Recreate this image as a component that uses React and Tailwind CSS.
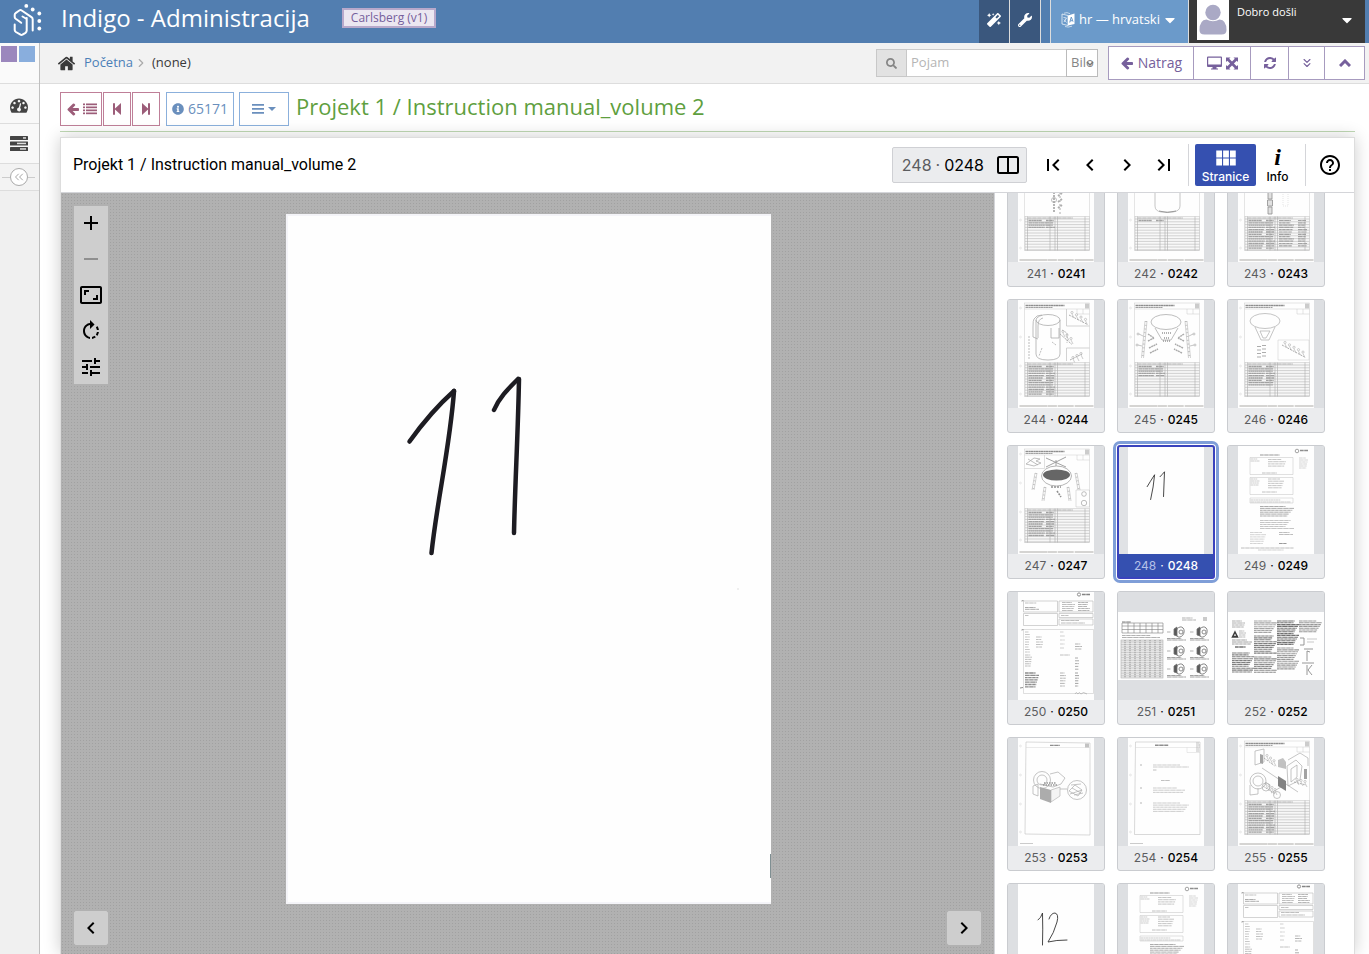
import React from "react";
import { FaMagic, FaWrench, FaCaretDown, FaSearch, FaInfoCircle } from "react-icons/fa";
import {
  MdAdd,
  MdRemove,
  MdAspectRatio,
  MdRotateRight,
  MdTune,
  MdViewModule,
  MdHelpOutline,
  MdFirstPage,
  MdLastPage,
  MdNavigateBefore,
  MdNavigateNext,
} from "react-icons/md";
import { ChevronRight, ChevronsLeft, ChevronsDown } from "lucide-react";

const GLYPHS = {
  home: "M1472 992v480q0 26-19 45t-45 19h-384v-384h-256v384h-384q-26 0-45-19t-19-45v-480q0-1 .5-3t.5-3l575-474 575 474q1 2 1 6zm223-69l-62 74q-8 9-21 11h-3q-13 0-21-7l-692-577-692 577q-12 8-24 7-13-2-21-11l-62-74q-8-10-7-23.5t11-21.5l719-599q32-26 76-26t76 26l244 204v-195q0-14 9-23t23-9h192q14 0 23 9t9 23v408l219 182q10 8 11 21.5t-7 23.5z",
  gauge: "M384 1152q0-53-37.5-90.5t-90.5-37.5-90.5 37.5-37.5 90.5 37.5 90.5 90.5 37.5 90.5-37.5 37.5-90.5zm192-448q0-53-37.5-90.5t-90.5-37.5-90.5 37.5-37.5 90.5 37.5 90.5 90.5 37.5 90.5-37.5 37.5-90.5zm428 481l101-382q6-26-7.5-48.5t-38.5-29.5-48 6.5-30 39.5l-101 382q-60 5-107 43.5t-63 98.5q-20 77 20 146t117 89 146-20 89-117q16-60-6-117t-72-91zm660-33q0-53-37.5-90.5t-90.5-37.5-90.5 37.5-37.5 90.5 37.5 90.5 90.5 37.5 90.5-37.5 37.5-90.5zm-640-640q0-53-37.5-90.5t-90.5-37.5-90.5 37.5-37.5 90.5 37.5 90.5 90.5 37.5 90.5-37.5 37.5-90.5zm448 192q0-53-37.5-90.5t-90.5-37.5-90.5 37.5-37.5 90.5 37.5 90.5 90.5 37.5 90.5-37.5 37.5-90.5zm320 448q0 261-141 483-19 29-54 29h-1402q-35 0-54-29-141-221-141-483 0-182 71-348t191-286 286-191 348-71 348 71 286 191 191 286 71 348z",
  arrowLeft: "M1664 896v128q0 53-32.5 90.5t-84.5 37.5h-704l293 294q38 36 38 90t-38 90l-75 76q-37 37-90 37-52 0-91-37l-651-652q-37-37-37-90 0-52 37-91l651-650q38-38 91-38 52 0 90 38l75 74q38 38 38 91t-38 91l-293 293h704q52 0 84.5 37.5t32.5 90.5z",
  refresh: "M1639 1056q0 5-1 7-64 268-268 434.5t-478 166.5q-146 0-282.5-55t-243.5-157l-129 129q-19 19-45 19t-45-19-19-45v-448q0-26 19-45t45-19h448q26 0 45 19t19 45-19 45l-137 137q71 66 161 102t187 36q134 0 250-65t186-179q11-17 53-117 8-23 30-23h192q13 0 22.5 9.5t9.5 22.5zm25-800v448q0 26-19 45t-45 19h-448q-26 0-45-19t-19-45 19-45l138-138q-148-137-349-137-134 0-250 65t-186 179q-11 17-53 117-8 23-30 23h-199q-13 0-22.5-9.5t-9.5-22.5v-7q65-268 270-434.5t480-166.5q146 0 284 55.5t245 156.5l130-129q19-19 45-19t45 19 19 45z",
};

function Glyph({ name, className }) {
  return (
    <svg viewBox="0 0 1792 1792" fill="currentColor" className={className} aria-hidden="true">
      <path d={GLYPHS[name]} />
    </svg>
  );
}

function Logo() {
  return (
    <svg viewBox="0 0 32 36" className="h-9 w-8 shrink-0" fill="none" stroke="white" strokeWidth="2" strokeLinejoin="round" strokeLinecap="round">
      <path d="M20.700 26.500V15.500q0-1.500-1.200-2.300L9.700 6.500q-1.200-.8-2.400 0L3.900 8.800q-1.200.8-1.200 2v2.200q0 1 1 1.800l5.500 4" />
      <path d="M14.700 14v12.500q0 1.500-1.200 2.300l-3 1.900q-1 .6-2 0L3.900 28q-1.200-.8-1.200-2v-5.500M10.500 12.500l4.200 2.500" />
      <g fill="white" stroke="none">
        <circle cx="14.300" cy="1.900" r="1.900" />
        <circle cx="20.700" cy="5.500" r="1.900" />
        <circle cx="27.300" cy="9.500" r="1.900" />
        <circle cx="27.300" cy="17" r="1.900" />
        <circle cx="27.300" cy="24.500" r="1.900" />
      </g>
    </svg>
  );
}

function ListGlyph() {
  return (
    <svg viewBox="0 0 14 12" className="h-3 w-3.5" fill="currentColor" aria-hidden="true">
      {[0, 3, 6, 9].map((y) => (
        <g key={y}>
          <rect x="0" y={y + 0.5} width="2" height="1.700" />
          <rect x="3" y={y + 0.5} width="11" height="1.700" />
        </g>
      ))}
    </svg>
  );
}

function StepGlyph({ flip }) {
  return (
    <svg viewBox="0 0 10 12" className="h-3 w-2.5" fill="currentColor" aria-hidden="true">
      {flip ? <path d="M1 0l6 5.500V0.200h2v11.600H7V6.500L1 12z" /> : <path d="M9 0L3 5.500V0.200H1v11.600h2V6.500L9 12z" />}
    </svg>
  );
}

function TasksGlyph() {
  return (
    <svg viewBox="0 0 18 15" className="h-[15px] w-[18px]" aria-hidden="true">
      {[[0, 13, 4], [5.5, 7, 10], [11, 10, 7]].map(([y, x, w]) => (
        <g key={y}>
          <rect x="0" y={y} width="18" height="4" rx="0.500" fill="#444" />
          <rect x={x} y={y + 1.2} width={w - 1} height="1.500" fill="#ddd" />
        </g>
      ))}
    </svg>
  );
}

function TranslateGlyph() {
  return (
    <svg viewBox="0 0 14 16" className="h-4 w-3.5" aria-hidden="true">
      <path d="M1 2l6 1.500v10L1 12z" fill="none" stroke="white" strokeWidth="0.700" />
      <path d="M7 3.500L13.500 1.500v10.500L7 13.500z" fill="white" />
      <path d="M2.500 5.500l3 .5-2.500 4M3 7.500l2.500 3" stroke="white" strokeWidth="0.700" fill="none" />
      <path d="M8.700 10.500l1.600-5.500 1.700 4.700M9.300 9l2.300-.6" stroke="#6b9aca" strokeWidth="1" fill="none" />
      <path d="M3 1.200q3-1.400 6 .5M4 14.500q3 1.300 7-.3" stroke="white" strokeWidth="0.600" fill="none" />
    </svg>
  );
}

function ScreenGlyph() {
  return (
    <svg viewBox="0 0 31 14" className="h-3.5 w-[31px]" fill="currentColor" aria-hidden="true">
      <path fillRule="evenodd" d="M1 0.500h13q1 0 1 1v8.500q0 1-1 1H9.500v1.500h1.500v1H4v-1h1.500V11H1q-1 0-1-1V1.500q0-1 1-1zM1.200 1.700v6.800h12.600V1.700z" />
      <path d="M19 1.500h4.500L22.200 2.800 25 5.600l2.800-2.800L26.500 1.500H31V6l-1.300-1.300L26.900 7.500l2.800 2.800L31 9v4.500h-4.500l1.300-1.300L25 9.400l-2.800 2.800 1.300 1.300H19V9l1.300 1.300 2.800-2.800-2.800-2.800L19 6z" />
    </svg>
  );
}

/* ---- Miniature page drawings ---- */

function Lines({ x, y, w, n, step = 2, seed = 1, color = "#8d8d8d", t = 0.9 }) {
  return Array.from({ length: n }, (_, i) => {
    const cut = ((i * 7 + seed * 5) % 6) / 20;
    return (
      <line
        key={i}
        x1={x}
        x2={x + w * (1 - cut)}
        y1={y + i * step}
        y2={y + i * step}
        stroke={color}
        strokeWidth={t}
        strokeDasharray={`${2 + ((i + seed) % 3)} 0.3 1.5 0.2`}
      />
    );
  });
}

function Holes() {
  return [8, 37, 66, 94].map((y) => <circle key={y} cx="2.500" cy={y} r="0.900" fill="none" stroke="#bbb" strokeWidth="0.500" />);
}

function PartsTable({ left = 0, right = 0 }) {
  return (
    <g>
      <rect x="7" y="62.500" width="64.500" height="34" fill="#f3f3f3" stroke="#999" strokeWidth="0.500" />
      {Array.from({ length: 12 }, (_, i) => (
        <line key={i} x1="7" x2="71.500" y1={65 + i * 2.8} y2={65 + i * 2.8} stroke="#888" strokeWidth="0.600" />
      ))}
      <path d="M9.500 62.500v34M32 62.500v34M37 62.500v34M39.500 62.500v34M67 62.500v34" stroke="#777" strokeWidth="0.600" />
      <Lines x={10} y={64} w={60} n={1} color="#777" />
      {left > 0 && (
        <g>
          <Lines x={10.5} y={66.500} w={18} n={left} step={2.3} color="#666" t={1.3} />
          <Lines x={28} y={66.500} w={9} n={left} step={2.3} seed={3} color="#666" t={1.3} />
        </g>
      )}
      {right > 0 && (
        <g>
          <Lines x={41} y={66.500} w={15} n={right} step={2.3} seed={2} color="#666" t={1.2} />
          <Lines x={60} y={66.500} w={9} n={right} step={2.3} seed={4} color="#666" t={1.2} />
        </g>
      )}
    </g>
  );
}

function PartsPage({ left, right, children }) {
  return (
    <g>
      <Holes />
      <rect x="6.500" y="3" width="65" height="93.500" fill="none" stroke="#aaa" strokeWidth="0.500" />
      <Lines x={7.5} y={5.500} w={52} n={1} color="#444" t={1.3} />
      <Lines x={7.5} y={7.500} w={36} n={1} color="#666" t={1.1} />
      <path d="M6.500 9h65M59 9v5h12.500M65 9v5" stroke="#aaa" strokeWidth="0.500" fill="none" />
      <rect x="67" y="3.500" width="4" height="5" fill="#aaa" />
      {children}
      <PartsTable left={left} right={right} />
      <path d="M1.500 106h74" stroke="#a5a39e" strokeWidth="1.600" strokeDasharray="28 .4 9 .8 16 1" />
    </g>
  );
}

function Leg({ x, y, dx = -3, h = 34 }) {
  return (
    <g stroke="#888" strokeWidth="0.600" fill="none">
      <path d={`M${x} ${y}l${dx} ${h}M${x + 2} ${y}l${dx} ${h}`} />
      <path d={`M${x + 1} ${y}l${dx} ${h}`} strokeWidth="2" strokeDasharray="0.800 3" />
    </g>
  );
}

function Bolts({ x, y, n = 4, dx = 4, dy = 3 }) {
  return (
    <g stroke="#777" strokeWidth="0.600" fill="none">
      <path d={`M${x} ${y}l${n * dx} ${n * dy}`} strokeWidth="1" strokeDasharray="2 1" />
      {Array.from({ length: n }, (_, i) => (
        <g key={i}>
          <circle cx={x + i * dx + 3} cy={y + i * dy - 2.5} r="1.100" />
          <path d={`M${x + i * dx + 3} ${y + i * dy - 1}l2 4`} />
        </g>
      ))}
    </g>
  );
}

function LetterPage() {
  return (
    <g>
      <circle cx="59" cy="5" r="1.800" fill="none" stroke="#666" strokeWidth="1" />
      <Lines x={62} y={4.500} w={11} n={1} color="#444" t={1.600} />
      <Lines x={61} y={12} w={9} n={6} step={2} color="#999" t={0.7} />
      <Lines x={22} y={9} w={26} n={1} color="#555" t={1} />
      <path d="M12 11.500h43v17H12zM12 31.500h43v17H12zM12 52h43v5H12z" fill="none" stroke="#999" strokeWidth="0.500" />
      <Lines x={12.500} y={13} w={9} n={2} color="#888" t={0.7} />
      <Lines x={30} y={13.500} w={18} n={4} step={2.2} color="#777" t={0.7} />
      <Lines x={12.500} y={33} w={9} n={4} color="#888" t={0.7} />
      <Lines x={30} y={33} w={16} n={5} step={2.2} color="#777" t={0.7} />
      <Lines x={24} y={27} w={20} n={1} />
      <Lines x={24} y={46} w={20} n={1} />
      <Lines x={12.500} y={54} w={40} n={2} color="#888" t={0.7} />
      <Lines x={22} y={60.500} w={34} n={6} step={1.9} color="#666" t={0.9} />
      <Lines x={22} y={74.500} w={34} n={5} step={2} seed={4} color="#888" t={0.8} />
      <Lines x={12} y={86.500} w={16} n={6} step={2.2} color="#999" t={0.7} />
      <Lines x={41} y={86.500} w={14} n={2} color="#777" t={0.8} />
      <Lines x={41} y={97.500} w={10} n={1} color="#444" />
      <Lines x={3} y={102} w={70} n={1} color="#888" />
      <Lines x={20} y={104} w={34} n={1} color="#aaa" />
    </g>
  );
}

function FormPage() {
  return (
    <g>
      <circle cx="61" cy="2.500" r="1.600" fill="none" stroke="#444" />
      <Lines x={64} y={2.500} w={11} n={1} color="#333" t={1.700} />
      <path d="M5.500 9h34v11h-34zM41 9h34v11h-34zM5.500 21.500h34v12h-34zM41 21.500h34v4H41zM41 27h34v6H41z" fill="none" stroke="#888" strokeWidth="0.600" />
      <path d="M5.500 37.500h70v64h-70z" fill="none" stroke="#999" strokeWidth="0.500" />
      <Lines x={7} y={11} w={15} n={1} />
      <Lines x={7} y={15.500} w={14} n={2} step={1.800} color="#666" />
      <Lines x={44} y={10.500} w={13} n={5} color="#888" />
      <Lines x={60} y={10.500} w={12} n={5} color="#777" seed={3} />
      <Lines x={7} y={23.500} w={5} n={1} />
      <Lines x={43} y={23.500} w={10} n={1} />
      <Lines x={43} y={28.500} w={24} n={2} step={2.500} color="#888" />
      <Lines x={7} y={40} w={5} n={9} step={2.500} color="#999" />
      <Lines x={18} y={45} w={7} n={5} step={2.500} seed={2} />
      <Lines x={42} y={40} w={5} n={5} step={4} color="#aaa" />
      <Lines x={57} y={52} w={7} n={3} step={2.500} color="#777" />
      <Lines x={42} y={63} w={13} n={1} />
      <Lines x={7} y={63} w={7} n={6} step={2.200} color="#888" />
      <Lines x={57} y={66} w={4} n={5} step={2.800} color="#666" />
      <Lines x={7} y={81} w={14} n={7} step={2.300} color="#444" t={1.300} />
      <Lines x={42} y={81} w={6} n={6} step={2.600} color="#777" />
      <Lines x={57} y={81} w={4} n={6} step={2.600} color="#555" />
      <path d="M3.500 9l2-.5M3.500 38l2-.5M2 96l3-.5" stroke="#444" strokeWidth="1" />
      <path d="M57 102q1-3 3 0 1-3 3 0 2-3 6 0" fill="none" stroke="#666" strokeWidth="0.600" />
    </g>
  );
}

const HANDWRITTEN = {
  248: (
    <g fill="none" stroke="#333" strokeWidth="0.900" strokeLinecap="round" strokeLinejoin="round">
      <path d="M19 40q3-5 7.500-12-1 12-4 25" />
      <path d="M32 30q2-2 4.500-5-.500 12-1 25" />
    </g>
  ),
  256: (
    <g fill="none" stroke="#333" strokeWidth="0.900" strokeLinecap="round">
      <path d="M20 36q3-2 4.500-7 .500 16 0 32" />
      <path d="M31 35q2-6 6-6 4 1 2 9-3 11-9 20 8-2 19-2" />
    </g>
  ),
};

const DRAWINGS = {
  241: (
    <PartsPage left={4}>
      <path d="M36 38v20M40 42l4-3M40 48l4-3M40 54l4-3" stroke="#777" strokeWidth="1.800" strokeDasharray="2 1" />
      <circle cx="36" cy="46" r="2.500" fill="none" stroke="#666" strokeWidth="0.700" />
      <path d="M42 38v22" stroke="#777" strokeWidth="1" strokeDasharray="2 2" />
    </PartsPage>
  ),
  242: (
    <PartsPage left={1}>
      <path d="M27 38v14q0 5 6 6h12q7-1 7-6V38" fill="none" stroke="#777" strokeWidth="0.700" />
      <path d="M31 57q8 3 17 0" fill="none" stroke="#555" />
    </PartsPage>
  ),
  243: (
    <PartsPage left={13} right={12}>
      <path d="M30 38h4v7h-4zM29.500 46h5v6h-5zM30 53h4v7h-4z" fill="#ccc" stroke="#444" strokeWidth="0.800" />
      <path d="M45 38v14h5V38" fill="none" stroke="#aaa" strokeWidth="0.500" strokeDasharray="1 1" />
    </PartsPage>
  ),
  244: (
    <PartsPage left={13}>
      <g fill="none" stroke="#666" strokeWidth="0.700">
        <ellipse cx="30" cy="20" rx="12" ry="5.500" />
        <path d="M18 20v34q0 6 12 6t12-6V20" />
        <path d="M24 15q-6 0-8 4-1 1-1 8v10l5 2M25 18q-5 1-5 8v12M33 28v10h8V28" />
        <path d="M48.500 9v17h23M48.500 61V48h23" stroke="#999" />
        <path d="M11 36v24M24 48l-3 8M44 30l5 3v10M38 45l-4-3" strokeDasharray="2 1" />
      </g>
      <Bolts x={51} y={15} n={4} dx={4.5} dy={2.3} />
      <Bolts x={42} y={34} n={3} dx={4} dy={3.5} />
      <Bolts x={52} y={60} n={3} dx={4} dy={-2} />
    </PartsPage>
  ),
  245: (
    <PartsPage left={5}>
      <ellipse cx="38" cy="22" rx="15" ry="7.500" fill="none" stroke="#666" strokeWidth="0.700" />
      <path d="M27 28l7 12h9l7-12" fill="none" stroke="#666" strokeWidth="0.700" />
      <path d="M34 33h9M36 38h5M35 41h7" stroke="#555" strokeWidth="1.500" strokeDasharray="1 1" />
      <Leg x={17} y={21} dx={-3.5} h={37} />
      <Leg x={57} y={21} dx={3.5} h={37} />
      <g fill="none" stroke="#777" strokeWidth="0.700">
        <path d="M20 34l6 4M20 41l6-3M21 48l8-4M22 53l8-4M56 34l-6 4M56 41l-6-3M55 48l-8-4M54 53l-8-4" strokeWidth="1.400" strokeDasharray="2 0.500" />
        <circle cx="10" cy="34" r="1" />
        <circle cx="66" cy="34" r="1" />
        <circle cx="9" cy="45" r="1" />
        <circle cx="67" cy="45" r="1" />
        <path d="M11 34l4 2M65 34l-4 2M10 45l4 1M66 45l-4 1" />
      </g>
    </PartsPage>
  ),
  246: (
    <PartsPage left={9}>
      <ellipse cx="27" cy="21" rx="15" ry="7.500" fill="none" stroke="#777" strokeWidth="0.700" />
      <path d="M17 27l6 13h8l6-13M22 31h10l-4 7h-3z" fill="none" stroke="#777" strokeWidth="0.700" />
      <path d="M26 45v14M21 46v12" stroke="#777" strokeWidth="4" strokeDasharray="1 2.500" />
      <path d="M40 40h31v20H40z" fill="none" stroke="#aaa" strokeWidth="0.500" />
      <Bolts x={44} y={45} n={5} dx={4.5} dy={2.4} />
    </PartsPage>
  ),
  247: (
    <PartsPage left={11}>
      <path d="M6.500 22.500h20V9M58 44h13.500v17H58z" fill="none" stroke="#999" strokeWidth="0.500" />
      <path d="M8 18l8-6 6 1-4 2 5 2-7 3zM10 13l10 6" fill="none" stroke="#777" strokeWidth="0.800" />
      <path d="M28 12l20 9M48 11l-20 10M38 14v6" stroke="#555" strokeWidth="0.900" />
      <ellipse cx="38.500" cy="30" rx="15" ry="10" fill="none" stroke="#666" strokeWidth="0.800" />
      <ellipse cx="38.500" cy="29" rx="13.500" ry="5.500" fill="#000" />
      <Leg x={17} y={27} dx={-3} h={17} />
      <Leg x={57} y={27} dx={3} h={17} />
      <Leg x={26} y={41} dx={-2} h={14} />
      <Leg x={49} y={41} dx={2} h={14} />
      <path d="M33 41h10M39 45l4 6" stroke="#444" strokeWidth="1.600" strokeDasharray="2 1" />
      <circle cx="66" cy="48" r="2.300" fill="none" stroke="#666" strokeWidth="0.700" />
      <circle cx="66" cy="57" r="2.700" fill="none" stroke="#666" strokeWidth="0.700" />
    </PartsPage>
  ),
  249: <LetterPage />,
  250: <FormPage />,
  253: (
    <g>
      <Holes />
      <path d="M8 4l64 1v92l-65-1z" fill="none" stroke="#999" strokeWidth="0.600" />
      <path d="M8 9.500h64" stroke="#bbb" strokeWidth="0.500" />
      <Lines x={32} y={7.300} w={13} n={1} color="#444" t={1.200} />
      <rect x="67" y="5.500" width="4" height="4" fill="#999" />
      <g fill="none" stroke="#777" strokeWidth="0.700">
        <circle cx="24" cy="42" r="8.500" />
        <circle cx="24" cy="42" r="5" />
        <path d="M32 36l8-2 7 6-4 6-8 3-13-3M15 48l5-2v12l-5-2z" />
        <circle cx="59" cy="52" r="9.500" />
        <path d="M51 53l6-6 7 5-4 6zM54 50l9 5M52 56l12-4M41 51h8M53 47l10-1M56 57l9-2" />
      </g>
      <path d="M22 49l11 3v13l-11-4z" fill="#777" />
      <path d="M33 52l9-3v9l-9 6z" fill="#eee" stroke="#777" strokeWidth="0.600" />
      <path d="M26 45h12M25 47h14" stroke="#555" strokeWidth="1.300" strokeDasharray="1.500 1" />
      <path d="M2 105.500h13" stroke="#aaa" />
    </g>
  ),
  254: (
    <g>
      <Holes />
      <path d="M7.500 4H72v92.500H6.500z" fill="none" stroke="#999" strokeWidth="0.600" />
      <path d="M7.500 9.500H72M59 9.500v5h13" fill="none" stroke="#bbb" strokeWidth="0.500" />
      <Lines x={27} y={7.300} w={18} n={1} color="#444" t={1.400} />
      <Lines x={68} y={5} w={4} n={5} />
      <Lines x={25} y={27} w={36} n={2} color="#999" t={0.8} />
      <Lines x={25} y={32} w={5} n={1} />
      <Lines x={33} y={42.500} w={12} n={1} />
      <Lines x={25} y={50} w={32} n={3} step={2.200} color="#999" t={0.8} />
      <Lines x={25} y={65} w={36} n={5} step={2.100} color="#999" t={0.8} />
      <path d="M12 27h2M12 50h2M12 65h2" stroke="#888" />
      <path d="M2 105.500h13" stroke="#aaa" />
    </g>
  ),
  255: (
    <PartsPage left={13}>
      <g fill="none" stroke="#777" strokeWidth="0.700">
        <path d="M17 13l9-2v13l-9 3zM50 22l12-7 8 5v8M49 28l9-6 6 6-2 14-12 6zM53 31l6-4v12l-6 5z" />
        <circle cx="20" cy="43" r="8" />
        <circle cx="20" cy="43" r="5" />
        <path d="M12 47v10l8-1v-6M24 30l36 24M33 55l10-6" />
        <circle cx="28" cy="49" r="4" />
        <circle cx="39" cy="57" r="3.500" />
      </g>
      <path d="M22 16l3 1v9l-3-1zM66 31h3v10h-3z" fill="#666" />
      <path d="M40 38l8 5v10l-8-5z" fill="#333" />
      <path d="M40 22l5-2 3 4v7l-8-2z" fill="#999" />
      <Bolts x={26} y={20} n={3} dx={3.5} dy={2.6} />
      <Bolts x={25} y={48} n={4} dx={3} dy={2} />
      <Bolts x={56} y={44} n={3} dx={4} dy={1} />
    </PartsPage>
  ),
  257: <LetterPage />,
  258: <FormPage />,
};

const WIDE = {
  251: (
    <g>
      <Lines x={4} y={10} w={12} n={1} color="#444" />
      <Lines x={64} y={6} w={14} n={2} />
      <rect x="85" y="5" width="4" height="4" fill="#bbb" />
      <path d="M4 11h41v10H4zM4 14h41M4 17.500h41M10 11v10M16 11v10M22 11v10M28 11v10M34 11v10M40 11v10" stroke="#555" strokeWidth="0.600" fill="none" />
      <Lines x={4} y={23.500} w={38} n={2} />
      <rect x="3" y="28" width="42" height="38" fill="#e2e2e2" stroke="#888" strokeWidth="0.500" />
      {[7, 12, 17, 22, 27, 32, 37, 42].map((x) => (
        <path key={x} d={`M${x} 28v38`} stroke="#777" strokeWidth="1.100" strokeDasharray="1.200 0.800" />
      ))}
      {Array.from({ length: 14 }, (_, i) => (
        <path key={i} d={`M3 ${30 + i * 2.6}h42`} stroke="#999" strokeWidth="0.500" />
      ))}
      {[20, 39, 57].map((y) =>
        [60, 83].map((x) => (
          <g key={`${x}-${y}`} fill="none" stroke="#444" strokeWidth="0.800">
            <ellipse cx={x + 2} cy={y} rx="4" ry="5.200" transform={`rotate(20 ${x + 2} ${y})`} />
            <circle cx={x + 3} cy={y} r="2" />
            <path d={`M${x - 4} ${y - 3}l3-2v9l-3-1z`} fill="#222" />
            <Lines x={x - 11} y={y} w={5} n={1} />
            <Lines x={x - 11} y={y + 6.5} w={19} n={2} step={1.500} color="#777" />
          </g>
        )),
      )}
    </g>
  ),
  252: (
    <g>
      <path d="M7 20l2.500 5h-5zM5 24.500h5" fill="none" stroke="#000" strokeWidth="1.500" />
      <Lines x={4} y={9} w={13} n={4} color="#888" />
      <Lines x={11} y={19} w={7} n={4} color="#999" />
      <Lines x={4} y={28} w={20} n={3} color="#777" />
      <Lines x={7} y={35} w={14} n={1} color="#444" t={1.500} />
      <Lines x={4} y={41} w={22} n={11} step={1.900} seed={2} color="#555" t={1.1} />
      <Lines x={26} y={9} w={23} n={7} step={1.900} color="#888" t={1.1} />
      <Lines x={26} y={24} w={23} n={10} step={1.900} color="#555" seed={3} t={1.1} />
      <Lines x={26} y={45} w={23} n={9} step={1.900} color="#666" t={1.1} />
      <Lines x={49} y={9} w={22} n={14} step={1.800} color="#444" seed={2} t={1.1} />
      <Lines x={49} y={36} w={22} n={12} step={1.900} color="#777" t={1.1} />
      <Lines x={71} y={9} w={23} n={7} step={1.800} color="#777" t={1.1} />
      <path d="M72 26h4v7h-4M79 39v10M79 39l3 1M79 53v10M84 53l-4 5 4 5M76 37h9M74 51h12" fill="none" stroke="#666" strokeWidth="0.900" />
      <path d="M79 27h10M79 30h7" stroke="#999" strokeWidth="0.700" />
    </g>
  ),
};

const PAGES = Array.from({ length: 18 }, (_, i) => 241 + i);

function Thumb({ n, selected }) {
  const wide = WIDE[n];
  return (
    <button
      type="button"
      aria-pressed={selected}
      className={
        selected
          ? "flex h-[134px] flex-col overflow-hidden rounded-[3px] border-2 border-[#3a43bd] bg-[#3550b0] text-white outline-[3px] outline-offset-1 outline-[#7f9ed8]"
          : "flex h-[134px] flex-col overflow-hidden rounded-[3px] border border-[#caccd0] bg-[#ebecee] text-black"
      }
    >
      <span className={selected ? "flex h-[107px] w-full items-center justify-center bg-[#e0e2e5]" : "flex h-[108px] w-full items-center justify-center bg-[#dddfe2]"}>
        {wide ? (
          <svg viewBox="0 0 96 68" className="h-[68px] w-full bg-[#fefefe]" aria-hidden="true">
            <g opacity="0.750">{wide}</g>
          </svg>
        ) : (
          <svg viewBox="0 0 76 108" className="h-full w-[76px] bg-[#fefefe]" aria-hidden="true">
            {HANDWRITTEN[n]}
            <g opacity="0.600">{DRAWINGS[n]}</g>
          </svg>
        )}
      </span>
      <span className="flex w-full flex-1 items-center justify-center text-xs leading-4">
        <span className={selected ? "text-[#b4c0e8]" : "text-[#5c5d60]"}>{n}</span>
        <span className="px-1">·</span>
        <span className="font-medium">0{n}</span>
      </span>
    </button>
  );
}

function IconButton({ label, className = "", children }) {
  return (
    <button type="button" aria-label={label} className={`flex items-center justify-center ${className}`}>
      {children}
    </button>
  );
}

export default function App() {
  return (
    <div className="flex h-screen flex-col overflow-hidden bg-white font-['Open_Sans',sans-serif] text-[13px] text-[#393939]">
      <header className="flex h-[43px] shrink-0 items-stretch bg-[#527eb0] pr-1 text-white">
        <a href="#" className="flex items-center pl-3">
          <Logo />
          <span className="-mt-2 pl-[17px] text-2xl">Indigo - Administracija</span>
        </a>
        <span className="mt-2 ml-8 h-5 border-2 border-[#b8a9cb] bg-[#ebe7f1] px-[7px] text-xs leading-4 text-[#76609c]">Carlsberg (v1)</span>
        <nav className="ml-auto flex items-stretch">
          <IconButton label="Alati" className="w-[31px] border-r border-[#ddd] bg-[#3a577d] pb-1">
            <FaMagic className="size-3.5" />
          </IconButton>
          <IconButton label="Postavke" className="w-[31px] border-r border-[#ddd] bg-[#3a577d] pb-1">
            <FaWrench className="size-3.5" />
          </IconButton>
          <button type="button" className="ml-[9px] flex w-[139px] items-center justify-center border-x border-[#ddd] bg-[#6b9aca] pb-1">
            <TranslateGlyph />
            <span className="pl-1">hr — hrvatski</span>
            <FaCaretDown className="ml-0.5 size-4" />
          </button>
          <button type="button" className="flex w-44 items-start bg-[#393939] pl-2 text-[11px]">
            <svg viewBox="0 0 32 40" className="h-10 w-8 bg-white" aria-hidden="true">
              <circle cx="16" cy="12.500" r="7.700" fill="#aaa9c5" />
              <path d="M2.500 30q0-10 7-10.500 6.500 3.500 13 0 7 .500 7 10.500 0 4.500-5 4.500h-17q-5 0-5-4.500z" fill="#aaa9c5" />
            </svg>
            <span className="pt-1 pl-2 leading-4">Dobro došli</span>
            <FaCaretDown className="mt-3 mr-2.5 ml-auto size-4" />
          </button>
        </nav>
      </header>

      <div className="flex min-h-0 flex-1">
        <aside className="flex w-10 shrink-0 flex-col border-r border-[#bfbfbf] bg-[#f0f0f0]">
          <div className="flex h-[41px] items-start gap-0.5 border-b border-[#ddd] bg-[#fafafa] pt-[3px] pl-px">
            <span className="size-4 bg-[#9b87bd]" />
            <span className="size-4 bg-[#89aedd]" />
          </div>
          <IconButton label="Nadzorna ploča" className="h-10 border-b border-[#ddd] bg-[#f8f8f8] pt-0.5 pr-0.5 text-[#444]">
            <Glyph name="gauge" className="size-[18px]" />
          </IconButton>
          <IconButton label="Zadaci" className="h-10 border-b border-[#ddd] bg-[#f8f8f8] pr-0.5">
            <TasksGlyph />
          </IconButton>
          <div className="flex h-[27px] items-center border-b border-[#ddd] bg-[#f3f3f3] pr-1 pl-0.5">
            <span className="h-px flex-1 bg-[#ccc]" />
            <IconButton label="Sažmi izbornik" className="size-[18px] rounded-full border border-[#aaa] bg-white text-[#999]">
              <ChevronsLeft className="size-3.5" strokeWidth={1.5} />
            </IconButton>
            <span className="h-px flex-1 bg-[#ccc]" />
          </div>
        </aside>

        <div className="flex min-w-0 flex-1 flex-col">
          <div className="flex h-[41px] shrink-0 items-center border-b border-[#ddd] bg-[#f2f2f2] pr-1 pl-[17px]">
            <Glyph name="home" className="size-[19px]" />
            <a href="#" className="pl-2 text-[#4c7fb8]">Početna</a>
            <ChevronRight className="ml-px size-3.5 text-[#aaa]" />
            <span className="pl-1">(none)</span>
            <form className="ml-auto flex h-7 text-[#858585]" onSubmit={(e) => e.preventDefault()}>
              <label htmlFor="term" aria-label="Pojam" className="flex w-[31px] items-center justify-center border border-[#c8c8c8] bg-[#e2e2e2]">
                <FaSearch className="size-[11px]" />
              </label>
              <input id="term" type="text" placeholder="Pojam" className="w-[159px] border-y border-[#ccc] bg-white px-1 outline-none placeholder:text-[#b5b5b5]" />
              <div className="relative w-8">
                <select aria-label="Polje" className="h-7 w-full appearance-none rounded-none border border-[#bbb] bg-white pl-1 outline-none">
                  <option>Bilo</option>
                </select>
                <svg viewBox="0 0 8 6" className="pointer-events-none absolute top-3 right-1 h-1.5 w-2" fill="none" stroke="#777" strokeWidth="1.500">
                  <path d="M1 1l3 3 3-3" />
                </svg>
              </div>
            </form>
            <div className="ml-2.5 flex h-[34px] text-[#76609c]">
              <button type="button" className="flex w-[86px] items-center justify-center gap-1 border border-[#a79bbf] bg-white text-sm">
                <Glyph name="arrowLeft" className="size-3.5" />
                Natrag
              </button>
              <IconButton label="Cijeli zaslon" className="w-[57px] border border-l-0 border-[#a79bbf] bg-white"><ScreenGlyph /></IconButton>
              <IconButton label="Osvježi" className="w-[38px] border border-l-0 border-[#a79bbf] bg-white"><Glyph name="refresh" className="size-3.5" /></IconButton>
              <IconButton label="Proširi" className="w-9 border border-l-0 border-[#a79bbf] bg-white"><ChevronsDown className="size-3.5" strokeWidth={2} /></IconButton>
              <IconButton label="Na vrh" className="w-10 border border-l-0 border-[#a79bbf] bg-white">
                <svg viewBox="0 0 12 8" className="h-2 w-3" fill="none" stroke="currentColor" strokeWidth="3"><path d="M1 7l5-5 5 5" /></svg>
              </IconButton>
            </div>
          </div>

          <main className="flex min-h-0 flex-1 flex-col pt-2 pr-3.5 pl-5">
            <div className="flex h-10 shrink-0 items-start border-b border-[#bfd8b4]">
              <div className="flex gap-px text-[#9c5d79]">
                <button type="button" aria-label="Natrag na popis" className="flex h-[34px] w-[42px] items-center justify-center gap-[3px] border border-[#bf7f98] bg-white">
                  <Glyph name="arrowLeft" className="size-3.5" />
                  <ListGlyph />
                </button>
                <IconButton label="Prethodni" className="h-[34px] w-7 border border-[#bf7f98] bg-white"><StepGlyph /></IconButton>
                <IconButton label="Sljedeći" className="h-[34px] w-7 border border-[#bf7f98] bg-white"><StepGlyph flip /></IconButton>
              </div>
              <button type="button" className="ml-1.5 flex h-[34px] w-[68px] items-center justify-center gap-1 border border-[#8bb0dc] bg-white text-sm text-[#6a8fbd]">
                <FaInfoCircle className="size-3" />
                65171
              </button>
              <button type="button" aria-label="Izbornik" className="ml-[5px] flex h-[34px] w-[50px] items-center justify-center gap-1 border border-[#8bb0dc] bg-white text-[#6a8fbd]">
                <svg viewBox="0 0 12 10" className="h-2.5 w-3" fill="currentColor"><path d="M0 0h12v1.800H0zM0 4h12v1.800H0zM0 8h12v1.800H0z" /></svg>
                <svg viewBox="0 0 8 4" className="h-1 w-2" fill="currentColor"><path d="M0 0h8L4 4z" /></svg>
              </button>
              <h1 className="pl-[7px] text-[22px] leading-7 whitespace-nowrap text-[#5f9f3f]">Projekt 1 / Instruction manual_volume 2</h1>
            </div>

            <section className="mt-[5px] flex min-h-0 flex-1 flex-col border border-b-0 border-[#ddd] bg-white font-[Inter,sans-serif] text-black shadow-[0_0_16px_rgba(0,0,0,0.2)]">
              <div className="flex h-[55px] shrink-0 items-center border-b border-[#d4d5d9] pl-3">
                <h2 className="font-[Roboto,sans-serif] text-base">Projekt 1 / Instruction manual_volume 2</h2>
                <div className="ml-auto flex h-9 items-center rounded-[2px] border border-[#cfd0d4] bg-[#ebecee] pr-1 pl-[9px] text-base">
                  <span className="text-[#5c5d60]">248</span>
                  <span className="px-1 text-[#5c5d60]">·</span>
                  <span>0248</span>
                  <IconButton label="Dvije stranice" className="ml-2.5 size-7">
                    <svg viewBox="0 0 24 20" className="h-5 w-6" fill="none" stroke="black" strokeWidth="2">
                      <rect x="2" y="2" width="20" height="16" rx="1.500" />
                      <path d="M12 2v16" />
                    </svg>
                  </IconButton>
                </div>
                <div className="ml-2 flex gap-px">
                  <IconButton label="Prva" className="size-9"><MdFirstPage className="size-6" /></IconButton>
                  <IconButton label="Prethodna" className="size-9"><MdNavigateBefore className="size-6" /></IconButton>
                  <IconButton label="Sljedeća" className="size-9"><MdNavigateNext className="size-6" /></IconButton>
                  <IconButton label="Zadnja" className="size-9"><MdLastPage className="size-6" /></IconButton>
                </div>
                <div className="ml-1.5 flex h-[42px] items-stretch border-x border-[#d4d5d9] px-1.5 text-xs leading-4 font-medium">
                  <button type="button" className="flex w-[61px] flex-col items-center rounded-[2px] bg-[#3550b0] pt-px text-white">
                    <MdViewModule className="-mb-0.5 size-[26px] shrink-0" />
                    Stranice
                  </button>
                  <button type="button" className="flex w-[43px] flex-col items-center pt-px">
                    <span className="h-6 font-['Liberation_Serif',serif] text-2xl leading-6 font-bold italic">i</span>
                    Info
                  </button>
                </div>
                <IconButton label="Pomoć" className="mx-1.5 size-9"><MdHelpOutline className="size-6" /></IconButton>
              </div>

              <div className="flex min-h-0 flex-1">
                <div className="grid min-w-0 flex-1 grid-cols-[34px_1fr_34px] bg-[#b1b1b1] bg-[radial-gradient(circle,#a1a1a1_0.8px,transparent_1px)] bg-[length:3px_3px] px-[13px] pt-[13px]">
                  <div className="flex flex-col justify-between pb-[9px]">
                    <div className="flex flex-col bg-[#cecece]">
                      <IconButton label="Povećaj" className="h-[34px]"><MdAdd className="size-6" /></IconButton>
                      <IconButton label="Smanji" className="h-[38px] text-[#8f8f8f]"><MdRemove className="size-6" /></IconButton>
                      <IconButton label="Prilagodi" className="h-[34px]"><MdAspectRatio className="size-6" /></IconButton>
                      <IconButton label="Rotiraj" className="h-[38px]"><MdRotateRight className="size-6" /></IconButton>
                      <IconButton label="Podešavanje" className="h-[34px]"><MdTune className="size-6" /></IconButton>
                    </div>
                    <IconButton label="Prethodna stranica" className="h-[34px] rounded-[2px] bg-[#cecece]"><MdNavigateBefore className="size-6" /></IconButton>
                  </div>
                  <div className="flex justify-center pt-2 pl-0.5">
                    <svg viewBox="0 0 485 690" className="h-[690px] w-[485px] bg-[#fefefe]" role="img" aria-label="Stranica 248">
                      <path d="M0 1h485M0 689h485M1 0v690" stroke="#f4f4f8" strokeWidth="2" />
                      <path d="M484.500 640v24" stroke="#7f8f92" strokeWidth="1" />
                      <g fill="none" stroke="#1d1c22" strokeWidth="4.500" strokeLinecap="round" strokeLinejoin="round">
                        <path d="M123.500 227.500C136 210 150 193 168 177" />
                        <path d="M168 177C164 232 151 287 145.500 339" />
                        <path d="M208 196C213 184 221 176 232 165" />
                        <path d="M233 165C232 220 229 270 228 319" />
                      </g>
                      <circle cx="452" cy="375" r="0.800" fill="#ddd" />
                    </svg>
                  </div>
                  <div className="flex flex-col justify-end pb-[9px]">
                    <IconButton label="Sljedeća stranica" className="h-[34px] rounded-[2px] bg-[#cecece]"><MdNavigateNext className="size-6" /></IconButton>
                  </div>
                </div>
                <div className="w-[360px] shrink-0 overflow-y-auto border-l border-[#d4d5d9] pl-3 [scrollbar-width:none]">
                  <div className="-mt-10 grid grid-cols-[98px_98px_98px] gap-3">
                    {PAGES.map((n) => (
                      <Thumb key={n} n={n} selected={n === 248} />
                    ))}
                  </div>
                </div>
              </div>
            </section>
          </main>
        </div>
      </div>
    </div>
  );
}
